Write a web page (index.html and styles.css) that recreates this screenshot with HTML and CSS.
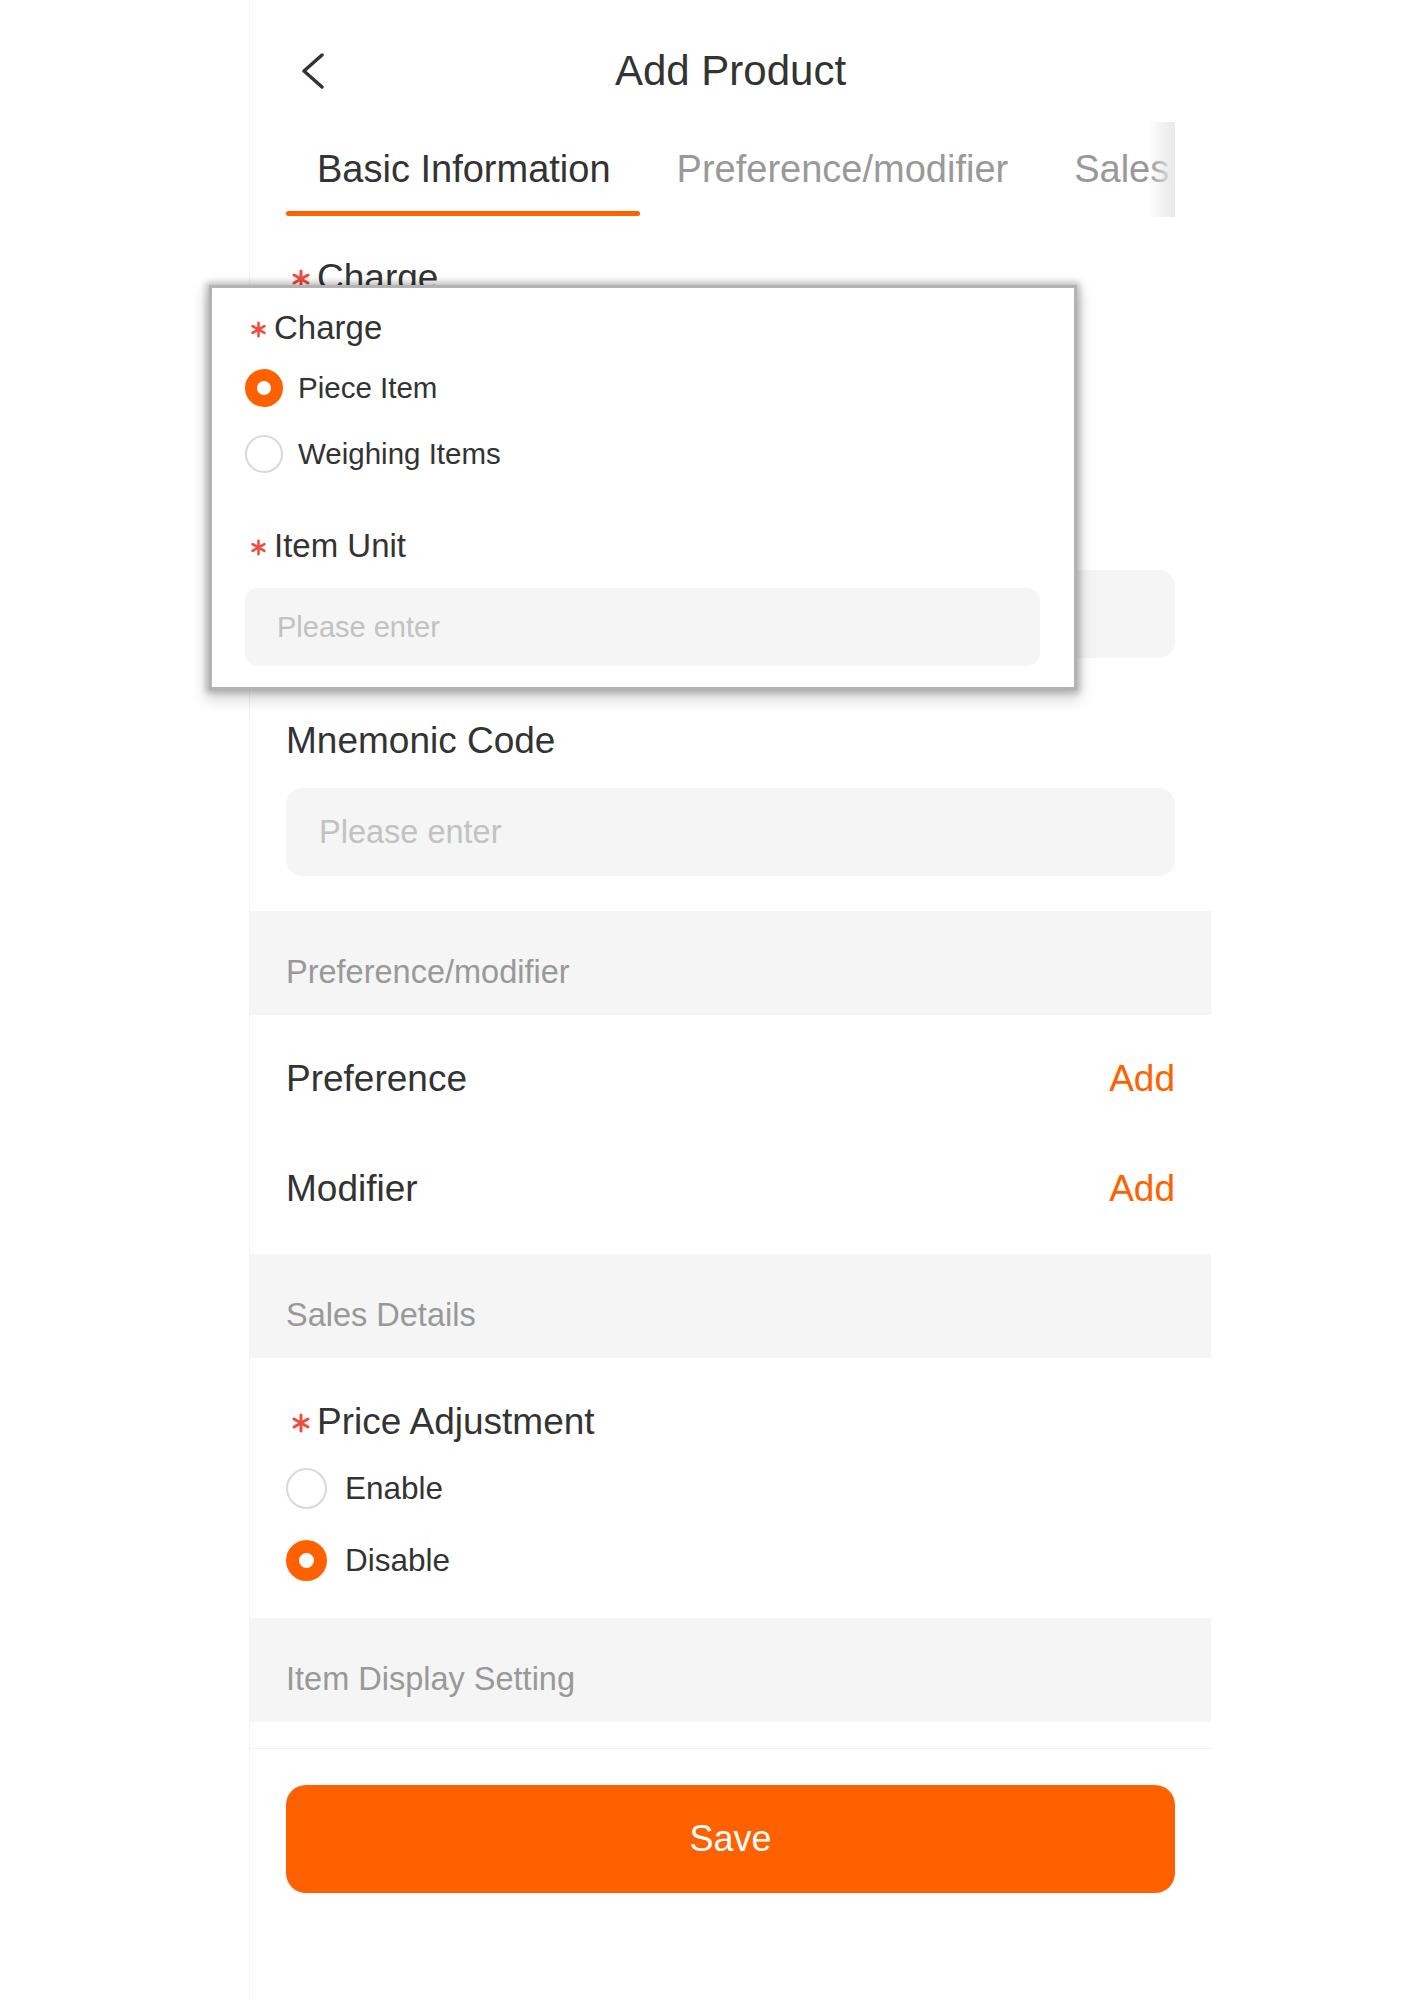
FILE: index.html
```html
<!DOCTYPE html>
<html lang="en">
<head>
<meta charset="utf-8">
<title>Add Product</title>
<link rel="stylesheet" href="styles.css">
</head>
<body>
<div class="screen">
  <header class="nav">
    <span class="back">
      <svg width="24" height="36" viewBox="0 0 24 36"><polyline points="21,2 3,18 21,34" fill="none" stroke="#333" stroke-width="3.4" stroke-linecap="round" stroke-linejoin="round"/></svg>
    </span>
    <h1 class="title">Add Product</h1>
    <span></span>
  </header>

  <nav class="tabs">
    <div class="tab active">Basic Information</div>
    <div class="tab">Preference/modifier</div>
    <div class="tab">Sales Details</div>
    <div class="tab-fade"></div>
  </nav>

  <div class="block charge-block">
    <div class="label"><span class="req"><svg width="20" height="20" viewBox="0 0 20 20"><g stroke="#f24b3c" stroke-width="3" stroke-linecap="round"><line x1="10" y1="2" x2="10" y2="18"/><line x1="3" y1="6" x2="17" y2="14"/><line x1="3" y1="14" x2="17" y2="6"/></g></svg></span>Charge</div>
    <div class="radio-row"><span class="radio checked"></span>Piece Item</div>
    <div class="radio-row"><span class="radio"></span>Weighing Items</div>
  </div>

  <div class="block unit-block">
    <div class="label"><span class="req"><svg width="20" height="20" viewBox="0 0 20 20"><g stroke="#f24b3c" stroke-width="3" stroke-linecap="round"><line x1="10" y1="2" x2="10" y2="18"/><line x1="3" y1="6" x2="17" y2="14"/><line x1="3" y1="14" x2="17" y2="6"/></g></svg></span>Item Unit</div>
    <input class="input" type="text" placeholder="Please enter">
  </div>

  <div class="block mnemonic-block">
    <div class="label">Mnemonic Code</div>
    <input class="input" type="text" placeholder="Please enter">
  </div>

  <div class="section-bar bar-pref">Preference/modifier</div>

  <div class="rows">
    <div class="row"><span>Preference</span><span class="add">Add</span></div>
    <div class="row"><span>Modifier</span><span class="add">Add</span></div>
  </div>

  <div class="section-bar">Sales Details</div>

  <div class="block price-block">
    <div class="label"><span class="req"><svg width="20" height="20" viewBox="0 0 20 20"><g stroke="#f24b3c" stroke-width="3" stroke-linecap="round"><line x1="10" y1="2" x2="10" y2="18"/><line x1="3" y1="6" x2="17" y2="14"/><line x1="3" y1="14" x2="17" y2="6"/></g></svg></span>Price Adjustment</div>
    <div class="radio-row"><span class="radio"></span>Enable</div>
    <div class="radio-row"><span class="radio checked"></span>Disable</div>
  </div>

  <div class="section-bar bar-display">Item Display Setting</div>

  <footer class="footer">
    <button class="save" type="button">Save</button>
  </footer>

  <div class="popup">
    <div class="p-label"><span class="p-req"><svg width="17" height="17" viewBox="0 0 20 20"><g stroke="#f24b3c" stroke-width="3" stroke-linecap="round"><line x1="10" y1="2" x2="10" y2="18"/><line x1="3" y1="6" x2="17" y2="14"/><line x1="3" y1="14" x2="17" y2="6"/></g></svg></span>Charge</div>
    <div class="p-radio-row"><span class="p-radio checked"></span>Piece Item</div>
    <div class="p-radio-row"><span class="p-radio"></span>Weighing Items</div>
    <div class="p-label p-unit"><span class="p-req"><svg width="17" height="17" viewBox="0 0 20 20"><g stroke="#f24b3c" stroke-width="3" stroke-linecap="round"><line x1="10" y1="2" x2="10" y2="18"/><line x1="3" y1="6" x2="17" y2="14"/><line x1="3" y1="14" x2="17" y2="6"/></g></svg></span>Item Unit</div>
    <input class="p-input" type="text" placeholder="Please enter">
  </div>
</div>
</body>
</html>
```

FILE: styles.css
```css
* { box-sizing: border-box; }

html, body {
  margin: 0;
  padding: 0;
  background: #fff;
}

body {
  font-family: "Liberation Sans", Arial, sans-serif;
  color: #333;
}

.screen {
  position: relative;
  width: 962px;
  margin-left: 249px;
  padding-top: 21px;
  border-left: 1px solid #f3f3f3;
  min-height: 2000px;
  background: #fff;
}

/* header */
.nav {
  display: grid;
  grid-template-columns: 1fr auto 1fr;
  align-items: center;
  height: 100px;
  padding: 0 36px;
}

.back {
  display: flex;
  align-items: center;
  margin-left: 15px;
}

.title {
  margin: 0;
  font-size: 42px;
  font-weight: 400;
  color: #333;
  white-space: nowrap;
}

/* tabs */
.tabs {
  position: relative;
  display: flex;
  height: 95px;
  margin: 1px 36px 0;
  overflow: hidden;
}

.tab {
  position: relative;
  flex: none;
  display: flex;
  align-items: center;
  padding: 0 33px;
  font-size: 38px;
  color: #999;
  white-space: nowrap;
}

.tab.active {
  color: #333;
  padding-left: 31px;
}

.tab.active::after {
  content: "";
  position: absolute;
  left: 0;
  right: 4px;
  bottom: 1px;
  height: 5px;
  border-radius: 3px;
  background: #ff6100;
}

.tab-fade {
  position: absolute;
  top: 0;
  right: 0;
  width: 27px;
  height: 100%;
  background: linear-gradient(to right, rgba(240,240,240,0), #e8e8e8);
}

/* form blocks */
.block {
  padding: 0 36px;
}

.label {
  display: flex;
  align-items: center;
  height: 44px;
  font-size: 37px;
  line-height: 44px;
  color: #333;
  white-space: nowrap;
}

.req {
  display: flex;
  align-items: center;
  width: 31px;
  padding-left: 5px;
  padding-top: 2px;
}

.radio-row {
  display: flex;
  align-items: center;
  gap: 18px;
  height: 72px;
  font-size: 31.5px;
  color: #333;
}

.radio {
  flex: none;
  width: 41px;
  height: 41px;
  border-radius: 50%;
  border: 2px solid #d9d9d9;
  background: #fff;
}

.radio.checked {
  border: 13px solid #ff6100;
}

.charge-block { margin-top: 39px; }
.price-block .label + .radio-row { margin-top: 8px; }

.unit-block { margin-top: 57px; }
.mnemonic-block { margin-top: 61px; }

.input {
  display: block;
  width: 100%;
  height: 88px;
  margin-top: 25px;
  padding: 0 33px;
  border: none;
  border-radius: 16px;
  background: #f5f5f5;
  font-family: inherit;
  font-size: 32.5px;
  color: #333;
  outline: none;
}

.input::placeholder { color: #c2c2c2; }

/* section bars */
.section-bar {
  height: 104px;
  padding: 41px 36px 0;
  background: #f5f5f5;
  font-size: 32.5px;
  line-height: 40px;
  color: #999;
}

.bar-pref { margin-top: 35px; }

.rows {
  padding: 9px 36px 10px;
}

.row {
  display: flex;
  align-items: center;
  justify-content: space-between;
  height: 110px;
  font-size: 37px;
  color: #333;
}

.add { color: #ff6100; }

.price-block { margin-top: 42px; }

.bar-display { margin-top: 22px; }

/* footer */
.footer {
  margin-top: 26px;
  border-top: 1px solid #f2f2f2;
  padding: 36px 36px 0;
}

.save {
  display: block;
  width: 100%;
  height: 108px;
  border: none;
  border-radius: 20px;
  background: #ff6100;
  color: #fff;
  font-family: inherit;
  font-size: 36px;
}

/* zoomed popup overlay */
.popup {
  position: absolute;
  left: -38px;
  top: 288px;
  width: 862px;
  height: 399px;
  padding: 20px 34px 0 33px;
  background: #fff;
  box-shadow: 0 0 0 3px #b3b3b3, 0 0 6px 6px rgba(0,0,0,0.2), 0 6px 14px 6px rgba(0,0,0,0.18);
}

.p-label {
  display: flex;
  align-items: center;
  height: 40px;
  font-size: 33px;
  line-height: 40px;
  color: #333;
}

.p-req {
  display: flex;
  align-items: center;
  width: 29px;
  padding-left: 5px;
  padding-top: 2px;
}

.p-radio-row {
  display: flex;
  align-items: center;
  gap: 15px;
  height: 66px;
  font-size: 29.5px;
  color: #333;
}

.p-label + .p-radio-row { margin-top: 7px; }

.p-radio {
  flex: none;
  width: 38px;
  height: 38px;
  border-radius: 50%;
  border: 2px solid #d9d9d9;
  background: #fff;
}

.p-radio.checked { border: 12px solid #ff6100; }

.p-unit { margin-top: 39px; }

.p-input {
  display: block;
  width: 100%;
  height: 78px;
  margin-top: 22px;
  padding: 0 32px;
  border: none;
  border-radius: 13px;
  background: #f5f5f5;
  font-family: inherit;
  font-size: 29px;
  outline: none;
}

.p-input::placeholder { color: #c2c2c2; }
```
